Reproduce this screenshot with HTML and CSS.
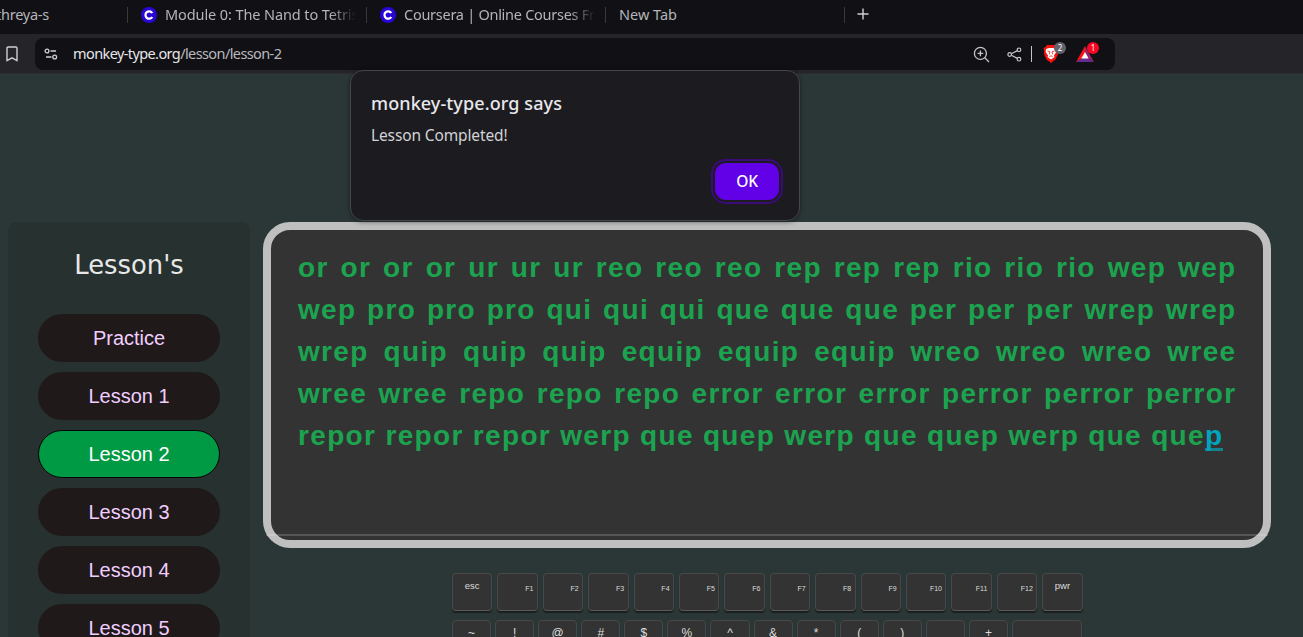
FILE: index.html
```html
<!DOCTYPE html>
<html lang="en">
<head>
<meta charset="utf-8">
<title>monkey-type.org</title>
<link rel="stylesheet" href="styles.css">
</head>
<body>
<div class="tabs">
  <div class="tab tab-first"><span class="t-a">threya-s</span></div>
  <div class="tab tab-wide"><svg class="fav" viewBox="0 0 16 16"><circle cx="8" cy="8" r="8" fill="#2a06d6"/><path d="M11.3 6A3.7 3.7 0 1 0 11.3 10" fill="none" stroke="#fff" stroke-width="2.2"/></svg><span class="t-b fade">Module 0: The Nand to Tetris</span></div>
  <div class="tab tab-wide"><svg class="fav" viewBox="0 0 16 16"><circle cx="8" cy="8" r="8" fill="#2a06d6"/><path d="M11.3 6A3.7 3.7 0 1 0 11.3 10" fill="none" stroke="#fff" stroke-width="2.2"/></svg><span class="t-c fade">Coursera | Online Courses Fr</span></div>
  <div class="tab tab-wide"><span class="t-d">New Tab</span></div>
  <svg class="plus" viewBox="0 0 12 12"><path d="M6 .5v11M.5 6h11" stroke="#cfcfd4" stroke-width="1.4"/></svg>
</div>
<div class="toolbar">
  <svg class="bookmark" viewBox="0 0 12 16"><path d="M1 2.2Q1 1 2.2 1H9.8Q11 1 11 2.2V14.6L6 11.8 1 14.6Z" fill="none" stroke="#cfcfd4" stroke-width="1.4"/></svg>
  <div class="address">
    <svg class="tune" viewBox="0 0 14 12"><g fill="none" stroke="#cfcfd4" stroke-width="1.3"><circle cx="3" cy="3" r="1.9"/><path d="M6.5 3H12M2 9H7.5"/><circle cx="10.7" cy="9" r="1.9"/></g></svg>
    <span class="url">monkey-type.org<span class="path">/lesson/lesson-2</span></span>
    <svg class="zoomer" viewBox="0 0 17 17"><g fill="none" stroke="#c3c3c9" stroke-width="1.3"><circle cx="7.4" cy="7.4" r="6"/><path d="M11.8 11.8L16 16M7.4 4.6v5.6M4.6 7.4h5.6"/></g></svg>
    <svg class="share" viewBox="0 0 15 15"><g fill="none" stroke="#c3c3c9" stroke-width="1.2"><circle cx="2.7" cy="7.5" r="1.8"/><circle cx="12" cy="2.8" r="1.8"/><circle cx="12" cy="12.2" r="1.8"/><path d="M4.3 6.7L10.4 3.6M4.3 8.3L10.4 11.4"/></g></svg>
    <span class="bar"></span>
    <span class="ext"><svg class="brave" viewBox="0 0 16 18"><path d="M4 0H12L13.5 2 15.5 3 14.8 6.5 15 9 12.5 14.5 8 18 3.5 14.5 1 9 1.2 6.5.5 3 2.5 2Z" fill="#f5120a"/><path d="M3 4L6 3H10L13 4 13.3 7 11 10.5 11.5 12 8 14.5 4.5 12 5 10.5 2.7 7Z" fill="#fff"/><path d="M4.5 6L7 6.8 6.3 9.3M11.5 6L9 6.8 9.7 9.3M6.4 11.5L8 10.8 9.6 11.5" fill="none" stroke="#f5120a" stroke-width=".8"/></svg><b class="badge grey">2</b></span>
    <span class="ext"><svg class="bat" viewBox="0 0 18 16"><path d="M9 0L0 16 9 10.5Z" fill="#ff1018"/><path d="M9 0L18 16 9 10.5Z" fill="#9e1f63"/><path d="M0 16H18L9 10.5Z" fill="#662d91"/><path d="M9 6L5.3 12.5H12.7Z" fill="#fff"/></svg><b class="badge red">1</b></span>
  </div>
</div>
<main class="page">
  <aside class="lessons">
    <h2>Lesson's</h2>
    <a>Practice</a><a>Lesson 1</a><a class="active">Lesson 2</a><a>Lesson 3</a><a>Lesson 4</a><a>Lesson 5</a>
  </aside>
  <section class="work">
    <div class="board"><p>or or or or ur ur ur reo reo reo rep rep rep rio rio rio wep wep wep pro pro pro qui qui qui que que que per per per wrep wrep wrep quip quip quip equip equip equip wreo wreo wreo wree wree wree repo repo repo error error error perror perror perror repor repor repor werp que quep werp que quep werp que que<span class="cur">p</span></p></div>
    <div class="keyboard">
      <div class="row top"><kbd class="mid">esc</kbd><kbd>F1</kbd><kbd>F2</kbd><kbd>F3</kbd><kbd>F4</kbd><kbd>F5</kbd><kbd>F6</kbd><kbd>F7</kbd><kbd>F8</kbd><kbd>F9</kbd><kbd>F10</kbd><kbd>F11</kbd><kbd>F12</kbd><kbd class="mid">pwr</kbd></div>
      <div class="row num"><kbd>~</kbd><kbd>!</kbd><kbd>@</kbd><kbd>#</kbd><kbd>$</kbd><kbd>%</kbd><kbd>^</kbd><kbd>&amp;</kbd><kbd>*</kbd><kbd>(</kbd><kbd>)</kbd><kbd></kbd><kbd>+</kbd><kbd></kbd></div>
    </div>
  </section>
</main>
<div class="dialog">
  <h1>monkey-type.org says</h1>
  <p>Lesson Completed!</p>
  <button>OK</button>
</div>
</body>
</html>
```
FILE: styles.css
```css
*{box-sizing:border-box}
body{margin:0;width:1303px;height:637px;overflow:hidden;position:relative;background:#2b3737;font-family:"Liberation Sans",Arial,sans-serif}
svg{display:block;flex:none}
.tabs{height:34px;background:#111115;display:flex;font:14.5px/29px "Noto Sans",sans-serif;color:#b5b5b9;white-space:nowrap}
.tab{height:29px;display:flex;align-items:center;position:relative}
.tab::after{content:"";position:absolute;right:0;top:7px;width:1px;height:16px;background:#38383e}
.tab-first{width:128px;overflow:hidden}
.tab-first span{margin-left:-4px;letter-spacing:-.25px}
.tab-wide{width:239px;padding-left:13px}
.fav{width:16px;height:16px;margin-right:8px}
.fade{width:190px;overflow:hidden;-webkit-mask-image:linear-gradient(90deg,#000 165px,transparent 191px);mask-image:linear-gradient(90deg,#000 165px,transparent 191px)}
.t-b{letter-spacing:-.1px}
.t-c{letter-spacing:-.27px}
.plus{width:12px;height:12px;margin:8px 0 0 12px}
.toolbar{height:40px;background:#252429;border-bottom:1px solid #2d2d32;display:flex;padding:4px 0 0 6px}
.bookmark{width:12px;height:16px;margin-top:8px}
.address{margin-left:17px;width:1080px;height:32px;border-radius:8px;background:#111115;display:flex;align-items:center;padding-left:9px}
.tune{width:14px;height:12px}
.url{margin-left:15px;width:899.5px;font:14.5px/30px "Noto Sans",sans-serif;color:#e6e6ea;letter-spacing:-.6px;height:32px}
.path{color:#b9b9bd}
.zoomer{width:17px;height:17px}
.share{width:15px;height:15px;margin-left:17.5px}
.bar{width:1px;height:16px;background:#c3c3c9;margin:0 11px 0 9px}
.ext{position:relative;margin-right:17px}
.brave{width:16px;height:18px}
.bat{width:18px;height:16px}
.badge{position:absolute;left:11px;top:-3px;width:12px;height:12px;border-radius:6px;font:8px/12px "Noto Sans",sans-serif;text-align:center;color:#fff}
.grey{background:#62626d}
.red{background:#fb0525;top:-4px;left:11px}
.page{height:563px;display:flex;padding:148px 0 0 8px;gap:13px;background:#2b3737}
.lessons{width:242px;height:440px;border-radius:8px 8px 0 0;background:#263130;padding:0 30px;display:flex;flex-direction:column;gap:10px;text-align:center}
.lessons h2{margin:0;height:82px;font:25.8px/87px "DejaVu Sans",sans-serif;color:#e8e8e8}
.lessons a{flex:none;height:48px;border-radius:24px;background:#1f1a19;color:#f1ceff;font-size:20px;line-height:48px}
.lessons .active{background:#009944;border:1px solid #050505;line-height:46px;color:#fff}
.work{width:1008px}
.board{position:relative;height:326px;border:8px solid #bfbfbf;border-radius:27px;background:#333;padding:17px 26.5px 0 27px}
.board::after{content:"";position:absolute;left:-5px;right:-5px;top:304px;height:2px;background:rgba(255,255,255,.17)}
.board p{margin:0;font-weight:700;font-size:28px;line-height:42px;letter-spacing:1.34px;text-align:justify;color:#1ca350}
.cur{color:#00a5bd;box-shadow:inset 0 -3px #138391}
.keyboard{margin:25px 0 0 189px;width:632px}
.row{display:flex}
kbd{display:block;flex:none;font-family:"Liberation Sans",Arial,sans-serif;background:#333;color:#ddd;border:1px solid #484848;border-radius:4px;box-shadow:0 2px 1px #1c1e1e}
.top{gap:5px}
.top kbd{width:40.42px;height:38px;font-size:7px;line-height:29px;text-align:right;padding-right:3.5px;border-bottom-color:#5a5a5a}
.top .mid{font-size:9.5px;line-height:24px;text-align:center;padding:0}
.num{margin-top:9px;gap:4px}
.num kbd{width:39.08px;height:38px;text-align:center;font-size:12px;line-height:24px}
.num kbd:last-child{width:70px}
.dialog{position:absolute;left:350px;top:70px;width:450px;height:151px;border:1px solid #45454a;border-radius:13px;background:#1c1b1f;box-shadow:0 1px 5px rgba(0,0,0,.45);padding:20px 20px 0;font-family:"Noto Sans",sans-serif;white-space:nowrap}
.dialog h1{margin:0;font-size:18px;line-height:25px;font-weight:500;color:#e8e8ec;letter-spacing:.1px}
.dialog p{margin:7px 0 0;font-size:15.5px;line-height:25px;color:#d2d2d7;letter-spacing:-.13px}
.dialog button{display:block;margin:15px 0 0 auto;width:64px;height:37px;padding:0;border:0;border-radius:11px;background:#6200e8;outline:2px solid #3b0b79;outline-offset:2px;color:#fff;font:500 15.5px/37px "Noto Sans",sans-serif;letter-spacing:-.3px}
```
